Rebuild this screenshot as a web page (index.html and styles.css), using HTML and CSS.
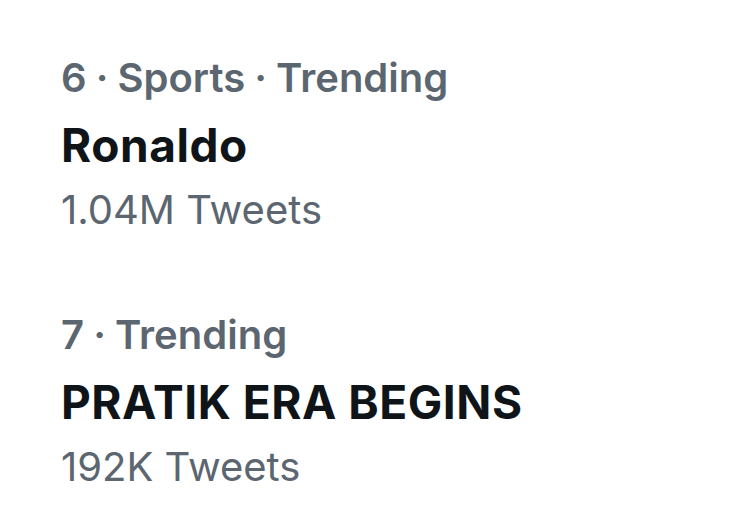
FILE: index.html
```html
<!DOCTYPE html>
<html>
<head>
<meta charset="utf-8">
<link rel="stylesheet" href="styles.css">
</head>
<body>
<div class="list">
  <div class="trend">
    <div class="meta">6 · Sports · Trending</div>
    <div class="title">Ronaldo</div>
    <div class="count">1.04M Tweets</div>
  </div>
  <div class="trend">
    <div class="meta">7 · Trending</div>
    <div class="title">PRATIK ERA BEGINS</div>
    <div class="count">192K Tweets</div>
  </div>
</div>
</body>
</html>
```
FILE: styles.css
```css
html, body {
  margin: 0;
  background: #ffffff;
}
body {
  font-family: Inter, "Liberation Sans", sans-serif;
  width: 739px;
  height: 522px;
  overflow: hidden;
}
.list {
  display: flex;
  flex-direction: column;
  gap: 73px;
  padding: 54px 0 0 61px;
}
.trend {
  display: flex;
  flex-direction: column;
}
.meta {
  font-size: 40px;
  font-weight: 600;
  color: #5b6670;
  line-height: 48px;
  word-spacing: -1px;
}
.title {
  font-size: 46px;
  font-weight: 700;
  color: #0f1419;
  line-height: 56px;
  margin-top: 15px;
  letter-spacing: 0.55px;
}
.count {
  font-size: 40px;
  font-weight: 400;
  color: #5b6670;
  line-height: 56px;
  margin-top: 9px;
}
```
